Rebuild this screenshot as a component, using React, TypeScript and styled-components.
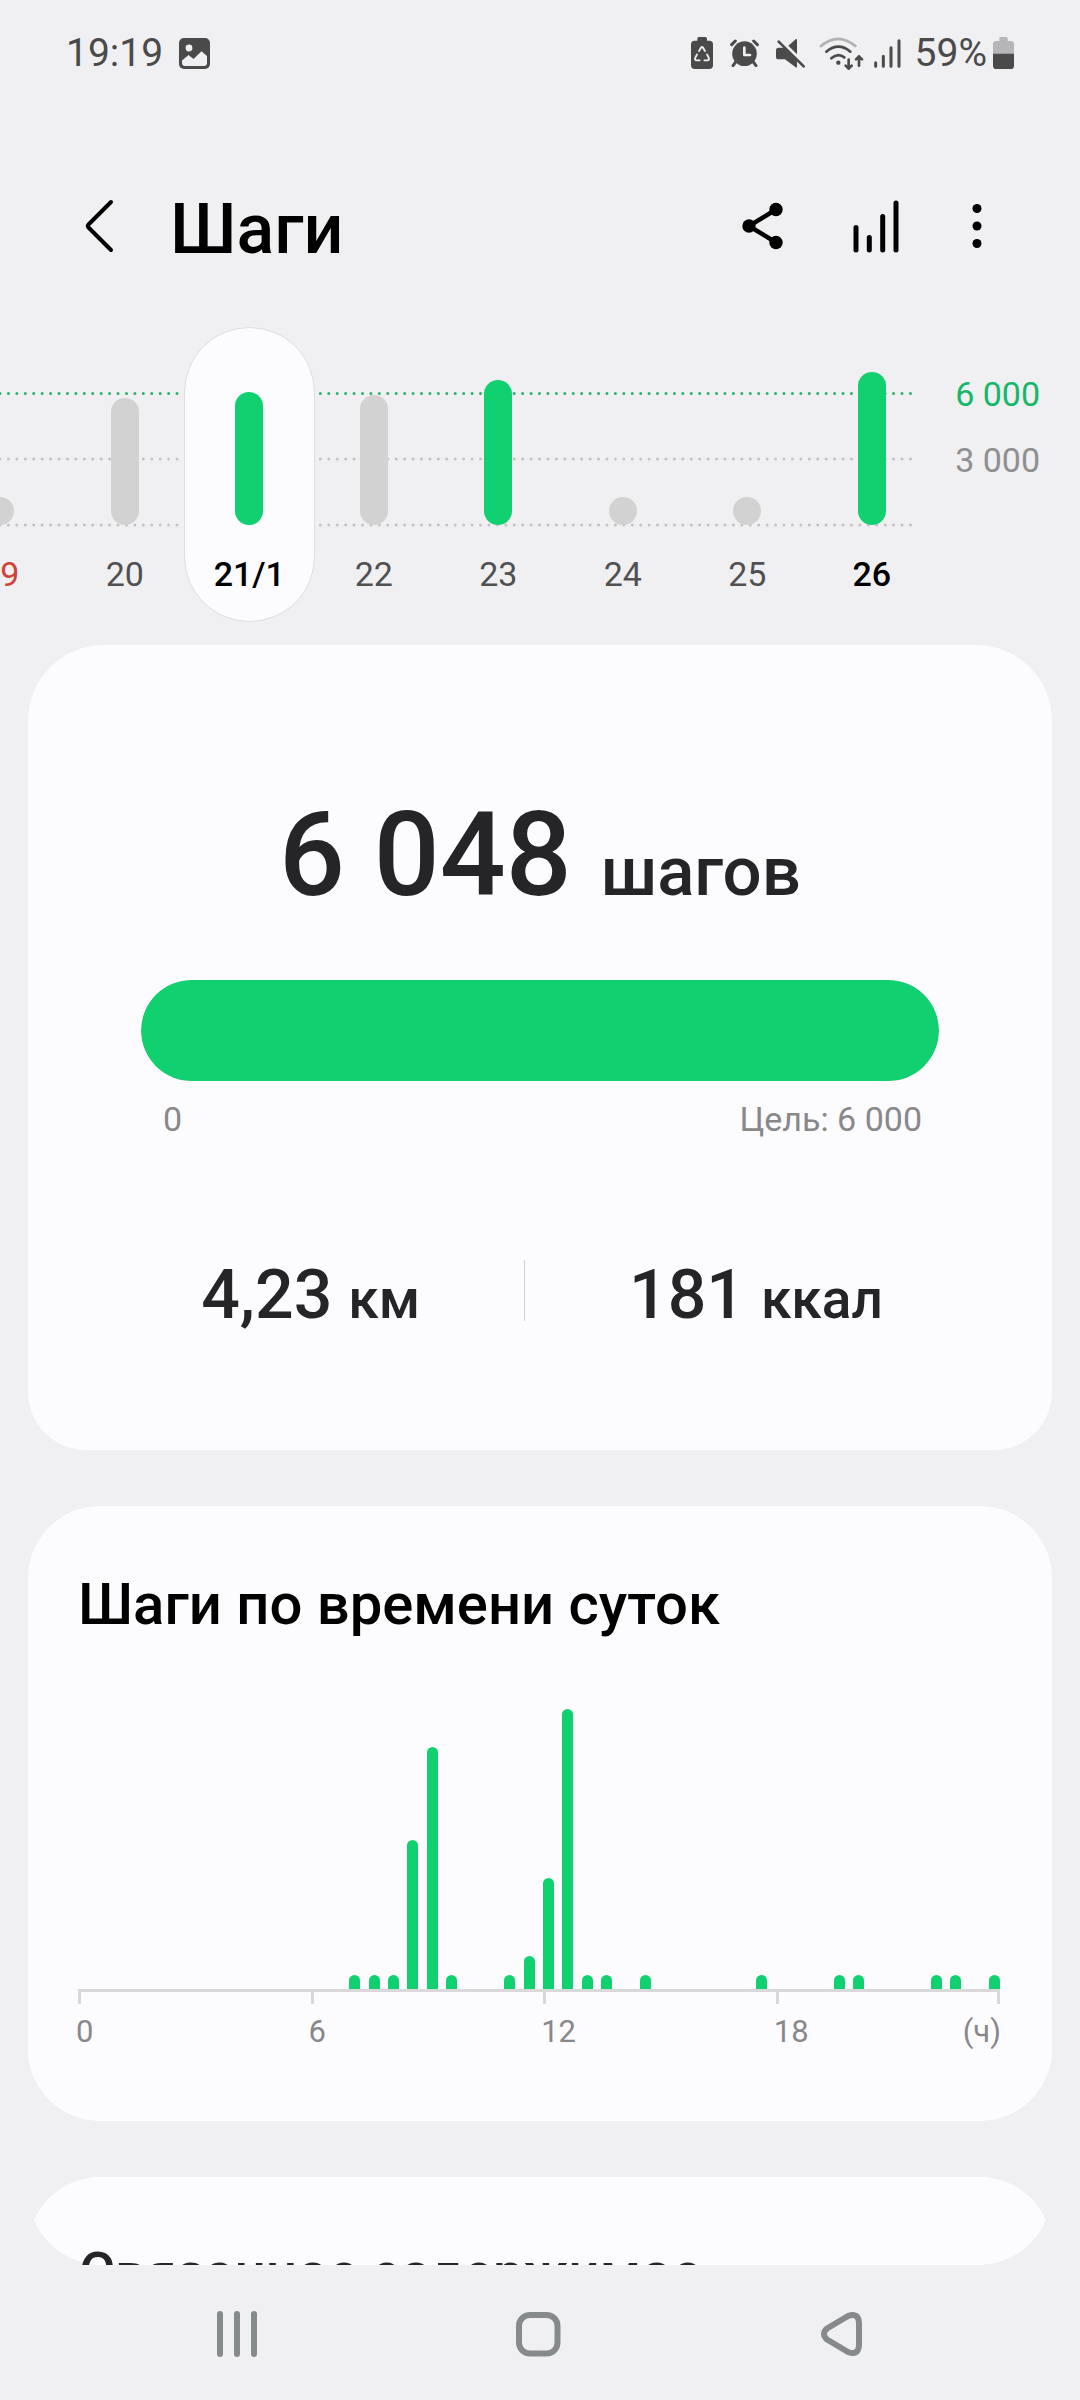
import React from "react";
import styled, { createGlobalStyle } from "styled-components";

const color = {
  page: "#f0f0f2",
  card: "#fcfcfe",
  green: "#11d070",
  goal: "#14b868",
  ink: "#252528",
  status: "#4a4a4a",
  muted: "#88888a",
  idle: "#d2d2d2",
  line: "#d9d9da",
  nav: "#868a8b",
};

const GlobalStyle = createGlobalStyle`
  *, *::before, *::after { box-sizing: border-box; }
  body {
    margin: 0;
    background: ${color.page};
    font-family: Roboto, "Noto Sans", sans-serif;
    color: ${color.ink};
  }
  button {
    margin: 0;
    padding: 0;
    border: 0;
    background: none;
    font: inherit;
    color: inherit;
    cursor: pointer;
  }
  h1, h2, p { margin: 0; font-weight: 500; }
  svg { display: block; flex: none; }
`;

const Screen = styled.div`
  display: flex;
  flex-direction: column;
  height: 100vh;
  overflow: hidden;
`;

/* Status bar */

const StatusBar = styled.div`
  display: flex;
  flex: none;
  align-items: center;
  justify-content: space-between;
  height: 106px;
  padding: 0 66px;
  color: ${color.status};
  font-size: 39px;
`;

const StatusGroup = styled.div<{ $gap: number }>`
  display: flex;
  align-items: center;
  gap: ${(p) => p.$gap}px;
`;

/* Header */

const Header = styled.header`
  display: flex;
  flex: none;
  align-items: center;
  justify-content: space-between;
  padding: 70px 83px 51px 68px;
  color: #000;
`;

const TitleGroup = styled.div`
  display: flex;
  align-items: center;
  gap: 38px;
`;

const Title = styled.h1`
  padding-top: 6px;
  font-size: 70px;
  line-height: 94px;
`;

const Actions = styled.div`
  display: flex;
  gap: 49px;
`;

/* Week strip */

const Week = styled.section`
  display: flex;
  flex: none;
  margin-bottom: 23px;
`;

const WeekChart = styled.div`
  display: grid;
  flex: 1;
  min-width: 0;
  overflow: hidden;
  & > * { grid-area: 1 / 1; }
`;

const GridLines = styled.svg`
  width: calc(100% - 20px);
  height: 100%;
`;

const Days = styled.div`
  display: flex;
  margin-left: -62px;
`;

const Day = styled.button<{ $selected?: boolean }>`
  display: flex;
  flex: 1 1 ${(p) => (p.$selected ? "8px" : "2px")};
  flex-direction: column;
  align-items: center;
  margin: 0 ${(p) => (p.$selected ? "-3px" : "0")};
  padding-bottom: 27px;
  border: 1px solid ${(p) => (p.$selected ? "#dddddf" : "transparent")};
  border-radius: 66px;
  background: ${(p) => (p.$selected ? color.card : "transparent")};
  box-shadow: ${(p) => (p.$selected ? `0 0 0 3px ${color.page}` : "none")};
`;

const DayBarSlot = styled.span`
  display: flex;
  align-items: flex-end;
  height: 197px;
  margin-bottom: 29px;
`;

const DayBar = styled.span<{ $done?: boolean }>`
  width: 28px;
  border-radius: 14px;
  background: ${(p) => (p.$done ? color.green : color.idle)};
`;

const DayLabel = styled.span<{ $tone: string; $strong?: boolean }>`
  color: ${(p) => p.$tone};
  font-size: 34px;
  font-weight: ${(p) => (p.$strong ? 500 : 400)};
  line-height: 40px;
  white-space: nowrap;
`;

const Scale = styled.div`
  display: flex;
  flex-direction: column;
  gap: 26px;
  width: 146px;
  padding: 47px 40px 0 0;
  text-align: right;
`;

const ScaleLabel = styled.span<{ $tone: string }>`
  color: ${(p) => p.$tone};
  font-size: 34px;
  line-height: 40px;
`;

/* Cards */

const Content = styled.main`
  display: flex;
  flex: 1;
  flex-direction: column;
  gap: 56px;
  min-height: 0;
  padding: 0 28px;
  overflow: hidden;
`;

const Card = styled.section`
  flex: none;
  border-radius: 72px;
  background: ${color.card};
`;

const SummaryCard = styled(Card)`
  padding: 140px 113px 115px;
  border-radius: 76px 76px 58px 58px;
`;

const Total = styled.p`
  display: flex;
  align-items: baseline;
  justify-content: center;
  gap: 29px;
  font-size: 116px;
  line-height: 140px;
`;

const TotalUnit = styled.span`
  font-size: 69px;
  line-height: 80px;
`;

const Progress = styled.div`
  height: 101px;
  margin-top: 55px;
  border-radius: 51px;
  background: ${color.line};
  overflow: hidden;
`;

const ProgressFill = styled.div`
  height: 100%;
  border-radius: 51px;
  background: ${color.green};
`;

const Range = styled.div`
  display: flex;
  justify-content: space-between;
  margin-top: 18px;
  padding: 0 17px 0 22px;
  color: ${color.muted};
  font-size: 34px;
  line-height: 40px;
`;

const Stats = styled.div`
  display: flex;
  justify-content: center;
  margin: 116px -42px 0 -38px;
`;

const Stat = styled.p`
  display: flex;
  align-items: baseline;
  gap: 16px;
  padding: 0 104px;
  font-size: 68px;
  line-height: 80px;
  white-space: nowrap;
`;

const StatUnit = styled.span`
  font-size: 55px;
  line-height: 60px;
`;

const Divider = styled.span`
  flex: none;
  width: 1px;
  height: 61px;
  margin-top: 5px;
  background: #d4d4d6;
`;

const HoursCard = styled(Card)`
  padding: 62px 52px 71px 50px;
`;

const CardTitle = styled.h2`
  color: #000;
  font-size: 58px;
  line-height: 72px;
`;

const Plot = styled.div`
  display: flex;
  align-items: flex-end;
  justify-content: space-between;
  height: 352px;
  padding-top: 69px;
  border-bottom: 3px solid ${color.line};
`;

const HourBar = styled.span`
  width: 11px;
  border-radius: 6px 6px 0 0;
  background: ${color.green};
`;

const Axis = styled.div`
  display: flex;
`;

const AxisCell = styled.div<{ $last?: boolean }>`
  flex: ${(p) => (p.$last ? "11 1 11px" : "12 1 0px")};
  min-width: 0;
`;

const Tick = styled.div<{ $last?: boolean }>`
  height: 12px;
  border: 0 solid ${color.line};
  border-left-width: 3px;
  border-right-width: ${(p) => (p.$last ? "3px" : "0")};
`;

const AxisLabels = styled.div`
  display: flex;
  justify-content: space-between;
  margin: 10px -1px 0 -2px;
  color: ${color.muted};
  font-size: 31px;
  line-height: 36px;
`;

/* The list is cut off by the navigation bar, so its surface gets rounded bottom corners too. */
const Peek = styled.section`
  display: grid;
  flex: 1;
  grid-template-rows: 100%;
  min-height: 0;
  overflow: hidden;
  & > * { grid-area: 1 / 1; }
`;

const PeekClip = styled.div`
  min-height: 0;
  border-radius: 0 0 74px 74px;
  overflow: hidden;
`;

const PeekCard = styled(Card)`
  height: 300px;
`;

const PeekBody = styled.div`
  padding: 60px 51px 0;
`;

const PeekTitle = styled(CardTitle)`
  color: ${color.ink};
  font-size: 55px;
`;

/* Navigation bar */

const NavBar = styled.nav`
  display: grid;
  flex: none;
  grid-template-columns: repeat(3, 1fr);
  height: 135px;
  padding: 2px 88px 0 86px;
`;

const NavButton = styled.button`
  display: grid;
  place-items: center;
`;

type DayData = { label: string; height: number; done?: boolean; selected?: boolean; tone?: string; strong?: boolean };

const days: DayData[] = [
  { label: "19", height: 28, tone: "#d0423a" },
  { label: "20", height: 127 },
  { label: "21/1", height: 133, done: true, selected: true, tone: "#000", strong: true },
  { label: "22", height: 130 },
  { label: "23", height: 145, done: true },
  { label: "24", height: 28 },
  { label: "25", height: 28 },
  { label: "26", height: 153, done: true, tone: "#000", strong: true },
];

/* Bar heights for each half-hour slot that has steps. */
const slots: Record<number, number> = {
  14: 14, 15: 14, 16: 14, 17: 149, 18: 242, 19: 14, 22: 14, 23: 33, 24: 111, 25: 280,
  26: 14, 27: 14, 29: 14, 35: 14, 39: 14, 40: 14, 44: 14, 45: 14, 47: 14,
};

const PhotoIcon = () => (
  <svg width="31" height="31" viewBox="0 0 31 31">
    <rect width="31" height="31" rx="5" fill={color.status} />
    <circle cx="10" cy="10" r="3.4" fill={color.page} />
    <path d="M3 22.500 9.500 17l5 4L22.500 13.200 28 18v7q0 3-3 3H6q-3 0-3-3Z" fill={color.page} />
  </svg>
);

const RecycleBatteryIcon = () => (
  <svg width="22" height="32" viewBox="0 0 66 96">
    <rect x="19" width="29" height="20" rx="5" fill={color.status} />
    <rect y="11" width="66" height="85" rx="11" fill={color.status} />
    <g fill="none" stroke={color.page} strokeWidth="5.500" strokeLinecap="round" strokeLinejoin="round">
      <path d="M24 42 30 32q3-4 6 0l6 10" />
      <path d="M18 52 13 62q-3 7 4 8h9" />
      <path d="M48 52l5 10q3 7-4 8h-9" />
    </g>
  </svg>
);

const AlarmIcon = () => (
  <svg width="29" height="28" viewBox="0 0 87 84">
    <g stroke={color.status} strokeWidth="9" strokeLinecap="round">
      <path d="M5 17 16 6M71 6 82 17M18 68 9 80M69 68l9 12" />
    </g>
    <circle cx="43.500" cy="44" r="37" fill={color.status} />
    <path d="M43 26v22h17" fill="none" stroke={color.page} strokeWidth="8" strokeLinecap="round" strokeLinejoin="round" />
  </svg>
);

const MuteIcon = () => (
  <svg width="29" height="29" viewBox="0 0 87 87">
    <path d="M63 3v43L37 20 59 1q4-2 4 2Z" fill={color.status} />
    <path d="M0 34q0-8 8-8h15l40 41v16q0 4-4 2L27 61H8q-8 0-8-8Z" fill={color.status} />
    <path d="M8 8 83 82" stroke={color.status} strokeWidth="8" strokeLinecap="round" />
  </svg>
);

const WifiIcon = () => (
  <svg width="45" height="33" viewBox="0 0 135 99">
    <g fill="none" stroke={color.status} strokeWidth="8" strokeLinecap="round" strokeLinejoin="round">
      <path d="M6 27Q57-16 109 27" stroke="#b1b1b2" />
      <path d="M22 44Q58 14 94 44" />
      <path d="M37 64Q57 46 76 61" />
      <path d="M89 68v27M80 86l9 9 9-9M120 86V58M111 67l9-9 9 9" />
    </g>
    <circle cx="58" cy="77" r="6.500" fill={color.status} />
  </svg>
);

const SignalIcon = () => (
  <svg width="27" height="29" viewBox="0 0 81 87">
    <path d="M5 71v11M28 52v30M51 26v56M75 5v77" stroke={color.status} strokeWidth="9" strokeLinecap="round" />
  </svg>
);

const BatteryIcon = () => (
  <svg width="21" height="32" viewBox="0 0 63 96">
    <path d="M23 0h17q4 0 4 4v8h9q10 0 10 10v30H0V22q0-10 10-10h9V4q0-4 4-4Z" fill="#b6b6b8" />
    <path d="M0 50h63v36q0 10-10 10H10Q0 96 0 86Z" fill={color.status} />
  </svg>
);

const BackIcon = () => (
  <svg width="64" height="64" viewBox="0 0 64 64">
    <path d="M43 8 20.500 30.500q-1.500 1.500 0 3L43 56" fill="none" stroke="#000" strokeWidth="4" strokeLinecap="round" />
  </svg>
);

const ShareIcon = () => (
  <svg width="64" height="64" viewBox="0 0 64 64">
    <path d="M45 15.500 18 32l27 16.500" fill="none" stroke="#000" strokeWidth="4.500" />
    <circle cx="45" cy="15.500" r="6.700" />
    <circle cx="18" cy="32" r="6.700" />
    <circle cx="45" cy="48.500" r="6.700" />
  </svg>
);

const TrendIcon = () => (
  <svg width="64" height="64" viewBox="0 0 64 64">
    <path d="M12 33.500V56M25.300 43.500V56M38.700 22.500V56M52 9v47" stroke="#000" strokeWidth="5" strokeLinecap="round" />
  </svg>
);

const MoreIcon = () => (
  <svg width="40" height="64" viewBox="0 0 40 64">
    <circle cx="20" cy="14.500" r="4.500" />
    <circle cx="20" cy="32" r="4.500" />
    <circle cx="20" cy="49.500" r="4.500" />
  </svg>
);

const RecentsIcon = () => (
  <svg width="48" height="48" viewBox="0 0 48 48">
    <path d="M7 4v40M24 4v40M41 4v40" stroke={color.nav} strokeWidth="6" strokeLinecap="round" />
  </svg>
);

const HomeIcon = () => (
  <svg width="48" height="48" viewBox="0 0 48 48">
    <rect x="4" y="5" width="38.500" height="38.500" rx="11" fill="none" stroke={color.nav} strokeWidth="6" />
  </svg>
);

const NavBackIcon = () => (
  <svg width="48" height="48" viewBox="0 0 48 48">
    <path
      d="M31 6 10 18.500Q4 24 10 29.500L31 42Q42 46 42 34V14Q42 2 31 6Z"
      fill="none"
      stroke={color.nav}
      strokeWidth="6"
      strokeLinejoin="round"
    />
  </svg>
);

export default function App() {
  return (
    <Screen>
      <GlobalStyle />
      <StatusBar>
        <StatusGroup $gap={16}>
          <span>19:19</span>
          <PhotoIcon />
        </StatusGroup>
        <StatusGroup $gap={14}>
          <StatusGroup $gap={17}>
            <RecycleBatteryIcon />
            <AlarmIcon />
            <MuteIcon />
          </StatusGroup>
          <StatusGroup $gap={10}>
            <WifiIcon />
            <SignalIcon />
          </StatusGroup>
          <StatusGroup $gap={6}>
            <span>59%</span>
            <BatteryIcon />
          </StatusGroup>
        </StatusGroup>
      </StatusBar>

      <Header>
        <TitleGroup>
          <button type="button" aria-label="Назад"><BackIcon /></button>
          <Title>Шаги</Title>
        </TitleGroup>
        <Actions>
          <button type="button" aria-label="Поделиться"><ShareIcon /></button>
          <button type="button" aria-label="Статистика"><TrendIcon /></button>
          <button type="button" aria-label="Ещё"><MoreIcon /></button>
        </Actions>
      </Header>

      <Week>
        <WeekChart>
          <GridLines aria-hidden="true">
            <g strokeWidth="3" strokeLinecap="round" strokeDasharray="0 8.430">
              <line x1="0" x2="100%" y1="66.500" y2="66.500" stroke="#27b36c" />
              <line x1="0" x2="100%" y1="132" y2="132" stroke="#c3c3c5" />
              <line x1="0" x2="100%" y1="198" y2="198" stroke="#c3c3c5" />
            </g>
          </GridLines>
          <Days>
            {days.map((d) => (
              <Day key={d.label} type="button" $selected={d.selected} aria-pressed={!!d.selected}>
                <DayBarSlot>
                  <DayBar $done={d.done} style={{ height: d.height }} />
                </DayBarSlot>
                <DayLabel $tone={d.tone ?? "#505053"} $strong={d.strong}>{d.label}</DayLabel>
              </Day>
            ))}
          </Days>
        </WeekChart>
        <Scale>
          <ScaleLabel $tone={color.goal}>6 000</ScaleLabel>
          <ScaleLabel $tone="#8f8f91">3 000</ScaleLabel>
        </Scale>
      </Week>

      <Content>
        <SummaryCard>
          <Total>
            6 048 <TotalUnit>шагов</TotalUnit>
          </Total>
          <Progress role="progressbar" aria-label="Шаги" aria-valuenow={6000} aria-valuemin={0} aria-valuemax={6000}>
            <ProgressFill style={{ width: "100%" }} />
          </Progress>
          <Range>
            <span>0</span>
            <span>Цель: 6 000</span>
          </Range>
          <Stats>
            <Stat>4,23 <StatUnit>км</StatUnit></Stat>
            <Divider />
            <Stat>181 <StatUnit>ккал</StatUnit></Stat>
          </Stats>
        </SummaryCard>

        <HoursCard>
          <CardTitle>Шаги по времени суток</CardTitle>
          <Plot>
            {Array.from({ length: 48 }, (_, i) => (
              <HourBar key={i} style={{ height: slots[i] ?? 0 }} />
            ))}
          </Plot>
          <Axis>
            {["0", "6", "12", "18"].map((hour) => {
              const last = hour === "18";
              return (
                <AxisCell key={hour} $last={last}>
                  <Tick $last={last} />
                  <AxisLabels>
                    <span>{hour}</span>
                    {last && <span>(ч)</span>}
                  </AxisLabels>
                </AxisCell>
              );
            })}
          </Axis>
        </HoursCard>

        <Peek>
          <PeekClip>
            <PeekCard as="div" />
          </PeekClip>
          <PeekBody>
            <PeekTitle>Связанное содержимое</PeekTitle>
          </PeekBody>
        </Peek>
      </Content>

      <NavBar>
        <NavButton type="button" aria-label="Недавние"><RecentsIcon /></NavButton>
        <NavButton type="button" aria-label="Главный экран"><HomeIcon /></NavButton>
        <NavButton type="button" aria-label="Назад"><NavBackIcon /></NavButton>
      </NavBar>
    </Screen>
  );
}
